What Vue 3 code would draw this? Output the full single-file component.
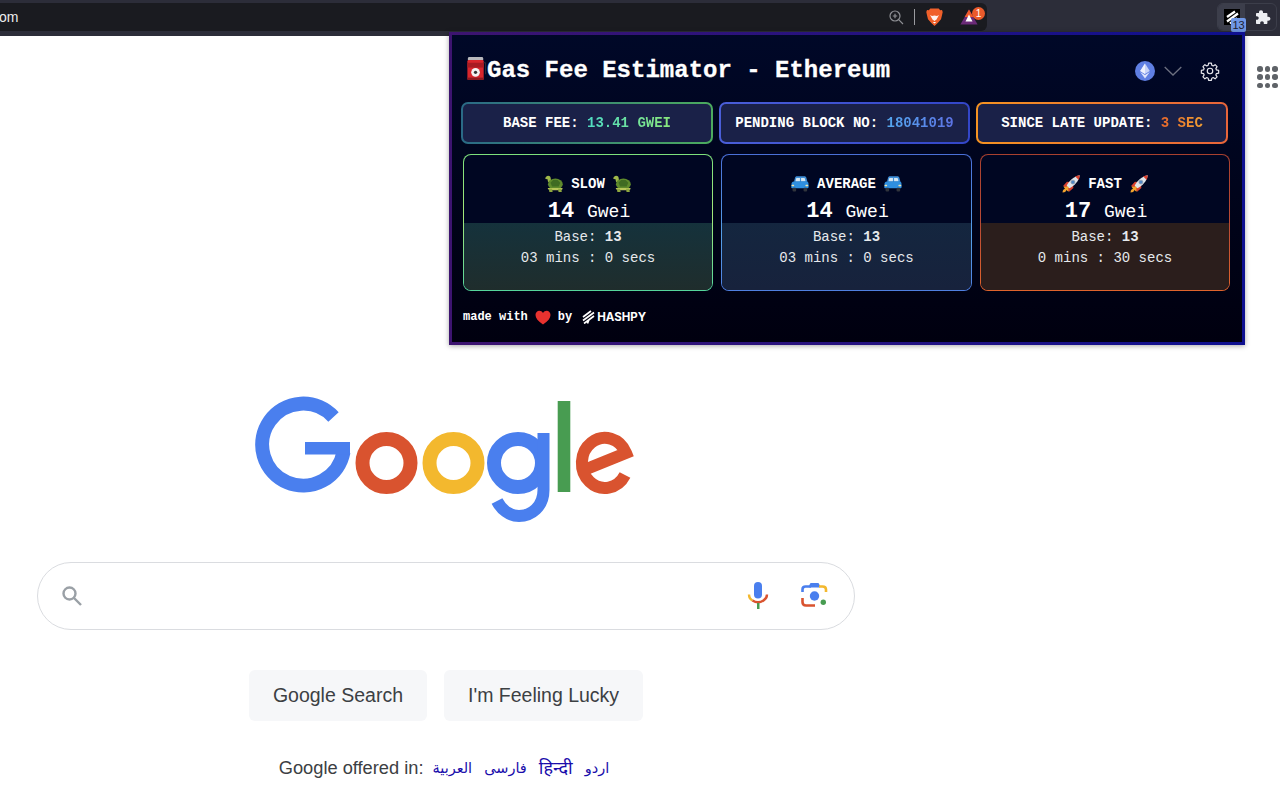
<template>
  <div class="page">
    <svg class="defs" width="0" height="0">
      <defs>
        <symbol id="turtle" viewBox="2 3.500 16.500 15.500">
          <path d="M3 4.500c1.600-1.600 4-.9 4.200 1.300L7.600 9 4.800 9.400 4.300 6.800 2.600 6.600C2 6.200 2.400 5.100 3 4.500Z" fill="#9fb84a"/>
          <ellipse cx="11.500" cy="11.500" rx="6.800" ry="5.200" fill="#5e8a2c"/>
          <path d="M7 10l2.500-2.500h4L16 10l-1.500 3.500h-6Z" fill="#3f6b22"/>
          <path d="M4.500 15h13.500c.5 1-.5 2-2 2H7c-1.500 0-2.500-1-2.500-2Z" fill="#b7c65a"/>
          <path d="M5.500 15.500h3l.5 3H6ZM14 15.500h3l.4 3h-3Z" fill="#8fa83f"/>
        </symbol>
        <symbol id="car" viewBox="1.500 3 17.500 15.500">
          <path d="M5.500 4.500c.3-.8 1-1.300 2-1.300h6.800c1 0 1.600.5 2 1.300l1.200 4H4.400Z" fill="#3f8fd8"/>
          <path d="M6.700 5h3.500v3.400H5.800ZM11.300 5h3.400l1 3.400h-4.400Z" fill="#d5e6f2"/>
          <path d="M2 10.500c0-1.400.9-2.200 2.200-2.300l12-.2c1.400 0 2.200.9 2.300 2.200l.2 3.300c0 .9-.5 1.500-1.400 1.500H3c-.9 0-1.300-.6-1.300-1.400Z" fill="#2f8fe0"/>
          <rect x="2" y="11.500" width="2.600" height="1.400" rx=".6" fill="#f6e6a8"/>
          <rect x="15.500" y="11.500" width="2.800" height="1.400" rx=".6" fill="#f6e6a8"/>
          <rect x="3" y="14.500" width="3.500" height="3.500" rx="1" fill="#30343c"/>
          <rect x="13.700" y="14.500" width="3.500" height="3.500" rx="1" fill="#30343c"/>
        </symbol>
        <symbol id="rocket" viewBox="2 1.500 16.500 16.500">
          <path d="M3.300 12 7 11.200l1.900 1.900L8 16.800l-2.200-1.500c.2 1-.8 2.300-3.300 2.300 0-2.500 1.200-3.500 2.300-3.300Z" fill="#f2a32d"/>
          <path d="M3 11.500 6.500 7.700l2.500.2-3 4.600ZM8.500 16.900l3.900-3.500-.2-2.500-4.600 3Z" fill="#d8412f"/>
          <path d="M6.300 11.200C8.700 6.800 12.700 2.700 18.300 1.700c-.9 5.600-5 9.600-9.400 12Z" fill="#dfe5ea"/>
          <path d="M14 2.700c1.200-.5 2.800-.8 4.300-1-.2 1.500-.5 3-1 4.300Z" fill="#d8412f"/>
          <circle cx="12" cy="8" r="1.800" fill="#4f86c6" stroke="#8c97a3" stroke-width=".7"/>
        </symbol>
      </defs>
    </svg>

    <header class="toolbar">
      <div class="address">
        <span class="url">om</span>
        <div class="address-icons">
          <svg class="zoom-ic" width="16" height="16" viewBox="0 0 16 16" fill="none" stroke="#8e8f94" stroke-width="1.200">
            <circle cx="7" cy="7" r="5"/>
            <path d="M10.700 10.700 15 15M7 4.800v4.400M4.800 7h4.400"/>
          </svg>
          <span class="divider"></span>
          <svg class="brave-ic" width="17" height="18" viewBox="0 0 17 18">
            <path d="M4.300.6h8.400l1.500 1.700 1.800-.3.700 1.900-.7 3.300-1 4-3.300 3.800L8.500 18l-3.200-3-3.300-3.800-1-4L.3 3.900 1 2l1.800.3Z" fill="#f0602a"/>
            <path d="M4 7l2 1 2.500-.5L11 8l2-1-2.500 4.500-2 1.500-2-1.500Z" fill="#fff" opacity=".92"/>
            <path d="M6.800 14h3.400l-1.700 1.500Z" fill="#fff"/>
          </svg>
          <div class="bat">
            <svg width="18" height="16" viewBox="0 0 18 16">
              <path d="M9 .5 17.600 15.500H.4Z" fill="#6b2a78"/>
              <path d="M9 .5 13.300 8H4.700Z" fill="#ef5a2a"/>
              <path d="M9 5.500 12.500 12.500H5.500Z" fill="#fff"/>
            </svg>
            <span class="bat-badge">1</span>
          </div>
        </div>
      </div>
      <div class="ext-group">
        <div class="ext-active">
          <svg class="ext-ic" width="16" height="16" viewBox="0 0 16 16">
            <rect width="16" height="16" fill="#000"/>
            <path d="M3 8 11 2.500M3 12.500 14 4.500M6 14.500 13 9" stroke="#fff" stroke-width="2.200" fill="none"/>
          </svg>
          <span class="ext-badge">13</span>
        </div>
        <svg class="puzzle" width="16" height="16" viewBox="0 0 16 16">
          <path d="M6 1.200c1.400 0 2 .9 2 2v.8h3.400c.6 0 1 .4 1 1v2.800h.8c1.300 0 2.200.8 2.200 2s-.9 2-2.200 2h-.8v2.200c0 .6-.4 1-1 1H8.800v-1c0-1-.7-1.700-1.800-1.700s-1.800.7-1.800 1.700v1H2c-.6 0-1-.4-1-1v-3.200h.8c1.100 0 1.900-.7 1.900-1.800S2.900 7.200 1.800 7.200H1V5c0-.6.400-1 1-1h2v-.8c0-1.100.6-2 2-2Z" fill="#eceef2"/>
        </svg>
      </div>
    </header>

    <main class="content">
      <div class="apps">
        <span v-for="n in 9" :key="n" class="dot"></span>
      </div>
      <div class="center">
        <svg class="logo" width="378" height="125" viewBox="1 0 378 125" fill="none">
          <path d="M77.500 20A41 41 0 1 0 87.500 55" stroke="#4a7fee" stroke-width="14"/>
          <rect x="49" y="45" width="45" height="12.500" fill="#4a7fee"/>
          <circle cx="130.500" cy="66" r="24" stroke="#d9532f" stroke-width="14"/>
          <circle cx="197.500" cy="66" r="24" stroke="#f3b82e" stroke-width="14"/>
          <circle cx="262" cy="66" r="24" stroke="#4a7fee" stroke-width="14"/>
          <path d="M287.500 36V93C287.500 110 275 119 263 119 253 119 245 112 241 104" stroke="#4a7fee" stroke-width="12"/>
          <rect x="301.700" y="4" width="12.600" height="91" fill="#489c51"/>
          <path d="M369 78A23 25 0 1 1 370 56L328 73" stroke="#d9532f" stroke-width="12" stroke-miterlimit="2"/>
        </svg>

        <div class="search">
          <svg class="search-ic" width="24" height="24" viewBox="0 0 24 24" fill="none" stroke="#9aa0a6" stroke-width="2.400">
            <circle cx="9.500" cy="9.500" r="6"/>
            <path d="M14 14l7 7"/>
          </svg>
          <div class="search-tools">
            <svg width="22" height="28" viewBox="0 0 22 28" fill="none">
              <rect x="7" y="0" width="8" height="16.500" rx="4" fill="#4a7fee"/>
              <path d="M2 12.500c0 3 1.500 5 3.500 6" stroke="#f3b82e" stroke-width="2.400"/>
              <path d="M5.500 18.500c3.500 2.300 7.500 2.300 11 0 1.800-1.200 3.500-3 3.500-6" stroke="#d9532f" stroke-width="2.400"/>
              <rect x="10" y="21" width="2.500" height="6" fill="#489c51"/>
            </svg>
            <svg width="28" height="26" viewBox="0 0 28 26" fill="none">
              <path d="M1.500 9V6.500c0-2 1-3 3-3H9L10.500 1h6L18 3.500" stroke="#4a7fee" stroke-width="2.600"/>
              <path d="M9.500 2h8l1.200 2.500H8.300Z" fill="#4a7fee"/>
              <path d="M18 3.500h3.500c2 0 3.500 1 3.500 3V9" stroke="#f3b82e" stroke-width="2.600"/>
              <path d="M1.500 15v4c0 2.500 1.500 3.500 3.500 3.500h9" stroke="#d9532f" stroke-width="2.600"/>
              <circle cx="13.500" cy="13" r="4.700" fill="#4a7fee"/>
              <circle cx="22.300" cy="19.300" r="2.700" fill="#489c51"/>
            </svg>
          </div>
        </div>

        <div class="buttons">
          <button class="gbtn">Google Search</button>
          <button class="gbtn">I'm Feeling Lucky</button>
        </div>

        <div class="langs">
          Google offered in:
          <a class="first-lang">العربية</a>
          <a>فارسی</a>
          <a class="hindi">हिन्दी</a>
          <a>اردو</a>
        </div>
      </div>
    </main>

    <section class="popup">
      <div class="pop-head">
        <svg class="pump" width="21" height="23" viewBox="0 0 21 24">
          <rect x="1.500" y="0" width="16" height="4" rx="1.500" fill="#b9b9bd"/>
          <rect x="1" y="3" width="17" height="21" rx="1.500" fill="#d8262c"/>
          <rect x="1" y="6" width="17" height="5" fill="#a81b22"/>
          <rect x="1" y="21.500" width="17" height="2.500" fill="#8e1a20"/>
          <circle cx="9.500" cy="16" r="4.500" fill="#f2f2f2"/>
          <circle cx="9.500" cy="16" r="1.700" fill="#333"/>
          <path d="M18 6h2v12" stroke="#30323a" stroke-width="1" fill="none"/>
        </svg>
        <h1 class="pop-title">Gas Fee Estimator - Ethereum</h1>
        <div class="pop-actions">
          <svg width="20" height="20" viewBox="0 0 20 20">
            <circle cx="10" cy="10" r="10" fill="#5f7fe3"/>
            <path d="M10 2.500 14.800 10 10 13 5.200 10Z" fill="#c9d4f8"/>
            <path d="M10 2.500V13L5.200 10Z" fill="#eef1fd"/>
            <path d="M5.200 11 10 14l4.800-3L10 17.500Z" fill="#dfe5fb"/>
          </svg>
          <svg class="chev" width="18" height="10" viewBox="0 0 18 10" fill="none" stroke="#6c7080" stroke-width="1.300">
            <path d="M.7 1 9 9l8.300-8"/>
          </svg>
          <svg class="gear" width="20" height="20" viewBox="0 0 24 24" fill="none" stroke="#e8e9ee" stroke-width="1.400" stroke-linejoin="round">
            <circle cx="12" cy="12" r="3.300"/>
            <path d="M10.300 2.500h3.400l.5 2.700 1.600.7 2.300-1.500 2.400 2.400-1.500 2.300.7 1.600 2.700.5v3.400l-2.700.5-.7 1.600 1.500 2.300-2.400 2.400-2.300-1.500-1.600.7-.5 2.700h-3.400l-.5-2.700-1.600-.7-2.300 1.500-2.400-2.400 1.500-2.300-.7-1.600-2.700-.5v-3.400l2.700-.5.7-1.600-1.500-2.300 2.400-2.400 2.300 1.500 1.600-.7Z"/>
          </svg>
        </div>
      </div>

      <div class="pills">
        <div v-for="p in pills" :key="p.label" class="pill" :class="p.cls">
          {{ p.label }}: <span class="pill-val">{{ p.value }}</span>
        </div>
      </div>

      <div class="cards">
        <div v-for="c in cards" :key="c.name" class="card" :class="c.cls">
          <div class="card-top">
            <div class="speed">
              <svg width="18" height="18"><use :href="'#' + c.icon"/></svg>
              <span>{{ c.name }}</span>
              <svg width="18" height="18"><use :href="'#' + c.icon"/></svg>
            </div>
            <div class="price"><b>{{ c.gwei }}</b> Gwei</div>
          </div>
          <div class="card-bottom">
            <div>Base: <b>13</b></div>
            <div>{{ c.time }}</div>
          </div>
        </div>
      </div>

      <footer class="pop-foot">
        <span>made with</span>
        <svg class="heart" width="16" height="15" viewBox="0 0 16 15">
          <path d="M8 14.500C3 11 .5 8.200.5 5 .5 2.500 2.300.8 4.300.8 5.800.8 7.200 1.600 8 3c.8-1.400 2.200-2.200 3.700-2.200 2 0 3.800 1.700 3.800 4.200 0 3.200-2.500 6-7.500 9.500Z" fill="#e8322f"/>
        </svg>
        <span>by</span>
        <span class="brand">
          <svg width="13" height="14" viewBox="0 0 13 14" fill="none" stroke="#fff" stroke-width="1.700">
            <path d="M1 7 9 1M1 10.500 12 2.500M2 13.500 12 6M7 9.500l-1.500 4"/>
          </svg>
          HASHPY
        </span>
      </footer>
    </section>
  </div>
</template>

<script setup>
const pills = [
  { label: 'BASE FEE', value: '13.41 GWEI', cls: 'pill-green' },
  { label: 'PENDING BLOCK NO', value: '18041019', cls: 'pill-blue' },
  { label: 'SINCE LATE UPDATE', value: '3 SEC', cls: 'pill-orange' }
]

const cards = [
  { name: 'SLOW', icon: 'turtle', gwei: 14, time: '03 mins : 0 secs', cls: 'card-green' },
  { name: 'AVERAGE', icon: 'car', gwei: 14, time: '03 mins : 0 secs', cls: 'card-blue' },
  { name: 'FAST', icon: 'rocket', gwei: 17, time: '0 mins : 30 secs', cls: 'card-orange' }
]
</script>

<style>
html,
body {
  margin: 0;
  background: #fff;
  overflow: hidden;
}
</style>

<style scoped>
.page {
  position: relative;
  width: 1280px;
  height: 800px;
  overflow: hidden;
  background: #fff;
  font-family: "Liberation Sans", Arial, sans-serif;
}

.defs {
  position: absolute;
}

.toolbar {
  display: flex;
  align-items: flex-start;
  justify-content: space-between;
  box-sizing: border-box;
  height: 36px;
  padding: 3px 3px 0 0;
  background: #2c2d39;
}

.address {
  display: flex;
  align-items: center;
  justify-content: space-between;
  box-sizing: border-box;
  width: 987px;
  height: 28px;
  background: #1a1b20;
  border-radius: 0 6px 6px 0;
  color: #ececee;
  font-size: 14px;
}

.url {
  margin-left: -1px;
}

.address-icons {
  display: flex;
  align-items: center;
}

.divider {
  width: 1px;
  height: 16px;
  margin: 0 11px 0 10px;
  background: #9a9ba0;
}

.bat {
  position: relative;
  display: flex;
  margin: 0 9px 0 17px;
}

.bat-badge {
  position: absolute;
  top: -2px;
  right: -7px;
  width: 13px;
  height: 13px;
  border-radius: 50%;
  background: #ea5a2b;
  color: #fff;
  font-size: 10px;
  line-height: 13px;
  text-align: center;
}

.ext-group {
  display: flex;
  align-items: center;
  box-sizing: border-box;
  width: 60px;
  height: 28px;
  border: 1px solid #3c3e4a;
  border-radius: 6px;
}

.ext-active {
  position: relative;
  display: flex;
  align-items: center;
  justify-content: center;
  width: 27px;
  height: 26px;
  background: #3c3e4b;
  border-radius: 5px 0 0 5px;
}

.ext-badge {
  position: absolute;
  right: -1px;
  bottom: -2px;
  width: 15px;
  height: 14px;
  background: #6f97e6;
  border-radius: 2px;
  color: #1d2130;
  font-size: 11px;
  line-height: 14px;
  text-align: center;
}

.puzzle {
  margin-left: 10px;
}

.content {
  position: relative;
}

.apps {
  position: absolute;
  top: 30px;
  left: 1257px;
  display: grid;
  grid-template-columns: repeat(3, 5.500px);
  gap: 2.800px 2.200px;
}

.dot {
  width: 5.500px;
  height: 5.500px;
  border-radius: 50%;
  background: #5f6368;
}

.center {
  display: flex;
  flex-direction: column;
  align-items: center;
  width: 892px;
  padding-top: 361px;
}

.logo {
  display: block;
  overflow: visible;
}

.search {
  display: flex;
  align-items: center;
  justify-content: space-between;
  box-sizing: border-box;
  width: 818px;
  height: 68px;
  margin-top: 40px;
  padding: 0 25px 0 22px;
  border: 1px solid #dadce0;
  border-radius: 34px;
}

.search-tools {
  display: flex;
  align-items: center;
  gap: 32px;
}

.buttons {
  display: flex;
  gap: 17px;
  margin-top: 40px;
}

.gbtn {
  height: 51px;
  padding: 0 24px;
  border: none;
  border-radius: 6px;
  background: #f6f7f9;
  color: #3c4043;
  font-family: "Liberation Sans", Arial, sans-serif;
  font-size: 19.500px;
}

.langs {
  display: flex;
  align-items: center;
  gap: 12px;
  margin: 36px 4px 0 0;
  color: #3c4043;
  font-size: 18.250px;
  line-height: 22px;
}

.langs a {
  color: #1a0dab;
  font-family: "DejaVu Sans", "Noto Sans", sans-serif;
  font-size: 14.500px;
}

.langs .first-lang {
  margin-left: -3px;
}

.langs .hindi {
  font-size: 18px;
}

.popup {
  position: absolute;
  top: 32px;
  left: 449px;
  box-sizing: border-box;
  width: 796px;
  height: 313px;
  padding: 0 0 0 9px;
  border: 3px solid transparent;
  background:
    linear-gradient(180deg, #000828, #00000f) padding-box,
    linear-gradient(90deg, #3d1470, #0e1090) border-box;
  box-shadow: 0 1px 5px rgba(0, 0, 0, 0.35);
  color: #fff;
  font-family: "Liberation Mono", "Courier New", monospace;
}

.pop-head {
  display: flex;
  align-items: center;
  box-sizing: border-box;
  height: 67px;
  padding: 4px 0 0 5px;
}

.pump {
  flex: none;
  margin-bottom: 4px;
}

.pop-title {
  margin: 0;
  font-size: 24px;
  font-weight: 700;
  line-height: 30px;
  -webkit-text-stroke: 0.3px #fff;
}

.pop-actions {
  display: flex;
  align-items: center;
  margin-left: auto;
  padding-right: 22px;
}

.chev {
  margin: 0 18px 0 9px;
}

.pills {
  display: grid;
  grid-template-columns: 252px 251px 252px;
  gap: 6px;
  width: 767px;
}

.pill {
  box-sizing: border-box;
  height: 42px;
  border: 2px solid transparent;
  border-radius: 7px;
  font-size: 14px;
  font-weight: 700;
  line-height: 38px;
  text-align: center;
  white-space: nowrap;
}

.pill-green {
  background:
    linear-gradient(#1a2148, #1a2148) padding-box,
    linear-gradient(90deg, #2a6a86, #4cab5e) border-box;
}

.pill-green .pill-val {
  background: linear-gradient(90deg, #4fdcc4, #8ae87c);
  -webkit-background-clip: text;
  background-clip: text;
  color: transparent;
}

.pill-blue {
  background:
    linear-gradient(#1a2148, #1a2148) padding-box,
    linear-gradient(90deg, #4a5ed8, #3346c8) border-box;
}

.pill-blue .pill-val {
  background: linear-gradient(90deg, #54a8f0, #5c72e4);
  -webkit-background-clip: text;
  background-clip: text;
  color: transparent;
}

.pill-orange {
  background:
    linear-gradient(#1a2148, #1a2148) padding-box,
    linear-gradient(90deg, #f59322, #e8653a) border-box;
}

.pill-orange .pill-val {
  background: linear-gradient(90deg, #e8682c, #f3a033);
  -webkit-background-clip: text;
  background-clip: text;
  color: transparent;
}

.cards {
  display: grid;
  grid-template-columns: 250px 251px 250px;
  gap: 8px;
  margin: 10px 0 0 2px;
  width: 767px;
}

.card {
  box-sizing: border-box;
  height: 137px;
  overflow: hidden;
  border: 1px solid transparent;
  border-radius: 8px;
  text-align: center;
}

.card-green {
  background:
    linear-gradient(#000622, #000622) padding-box,
    linear-gradient(180deg, #7de07c 0%, #a4e87a 45%, #55d59c 100%) border-box;
}

.card-blue {
  background:
    linear-gradient(#000622, #000622) padding-box,
    linear-gradient(180deg, #4a6fd8 0%, #55a0e8 60%, #4f7fe0 100%) border-box;
}

.card-orange {
  background:
    linear-gradient(#000622, #000622) padding-box,
    linear-gradient(180deg, #a8402f 0%, #b84a35 50%, #e0642c 100%) border-box;
}

.card-top {
  box-sizing: border-box;
  height: 68px;
  padding-top: 19px;
}

.speed {
  display: flex;
  align-items: center;
  justify-content: center;
  gap: 8px;
  height: 20px;
  font-size: 14px;
  font-weight: 700;
}

.price {
  margin-top: 6px;
  padding-left: 2px;
  font-size: 18px;
  line-height: 24px;
}

.price b {
  margin-right: 2px;
  font-size: 22px;
}

.card-bottom {
  height: 67px;
  padding-top: 4px;
  box-sizing: border-box;
  color: #e6e9ec;
  font-size: 14px;
  line-height: 21px;
}

.card-green .card-bottom {
  background: linear-gradient(180deg, #15323c, #1f2d2c);
}

.card-blue .card-bottom {
  background: linear-gradient(180deg, #14263f, #17223c);
}

.card-orange .card-bottom {
  background: #2b1e1c;
}

.pop-foot {
  display: flex;
  align-items: center;
  gap: 7px;
  height: 52px;
  margin-left: 2px;
  font-size: 12px;
  font-weight: 700;
}

.brand {
  display: flex;
  align-items: center;
  gap: 2px;
  margin-left: 3px;
  font-family: Inter, "Liberation Sans", sans-serif;
  font-size: 11.500px;
  font-weight: 700;
}
</style>
